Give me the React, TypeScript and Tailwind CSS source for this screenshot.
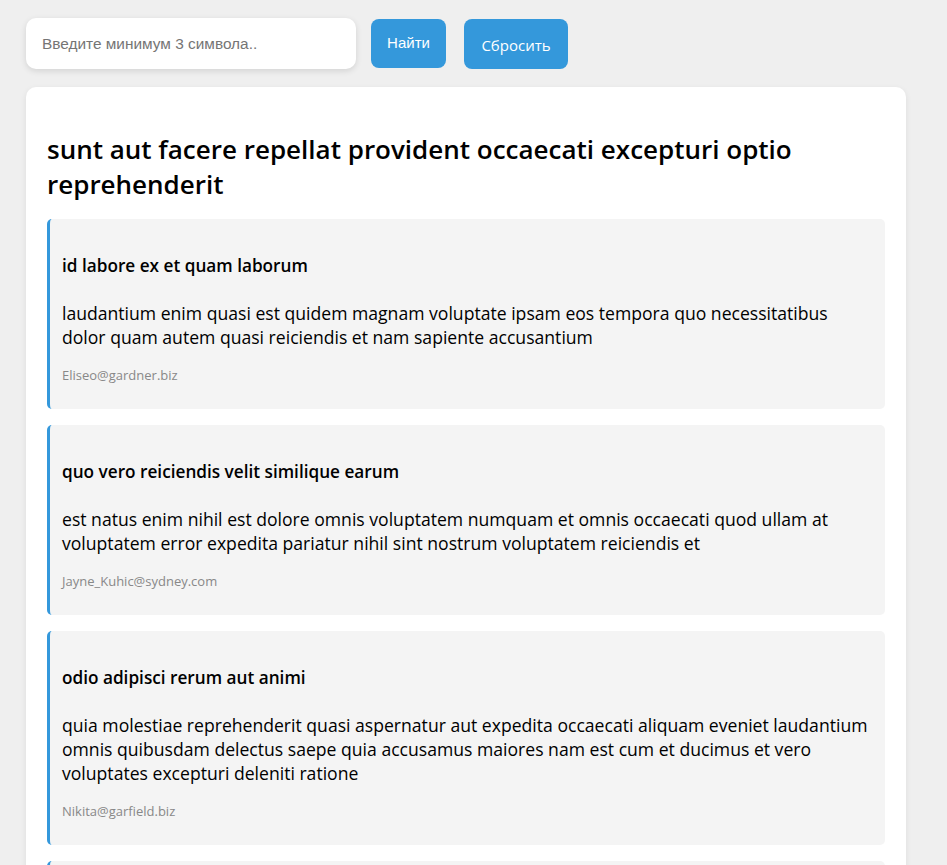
import { useState } from 'react'

const posts = {
  title: 'sunt aut facere repellat provident occaecati excepturi optio reprehenderit',
  comments: [
    {
      id: 1,
      name: 'id labore ex et quam laborum',
      body: 'laudantium enim quasi est quidem magnam voluptate ipsam eos tempora quo necessitatibus dolor quam autem quasi reiciendis et nam sapiente accusantium',
      email: 'Eliseo@gardner.biz',
    },
    {
      id: 2,
      name: 'quo vero reiciendis velit similique earum',
      body: 'est natus enim nihil est dolore omnis voluptatem numquam et omnis occaecati quod ullam at voluptatem error expedita pariatur nihil sint nostrum voluptatem reiciendis et',
      email: 'Jayne_Kuhic@sydney.com',
    },
    {
      id: 3,
      name: 'odio adipisci rerum aut animi',
      body: 'quia molestiae reprehenderit quasi aspernatur aut expedita occaecati aliquam eveniet laudantium omnis quibusdam delectus saepe quia accusamus maiores nam est cum et ducimus et vero voluptates excepturi deleniti ratione',
      email: 'Nikita@garfield.biz',
    },
    {
      id: 4,
      name: 'alias odio sit',
      body: 'non et atque occaecati deserunt quas accusantium unde odit nobis qui voluptatem quia voluptas consequuntur itaque dolor et qui rerum deleniti ut occaecati',
      email: 'Lew@alysha.tv',
    },
  ],
}

export default function App() {
  const [query, setQuery] = useState('')

  return (
    <div className="min-h-screen bg-[#efefef] px-[26px] pt-[18px] pb-10 font-['Open_Sans',sans-serif] text-black">
      {/* Search bar */}
      <div className="flex items-center gap-[15px]">
        <input
          value={query}
          onChange={(e) => setQuery(e.target.value)}
          placeholder="Введите минимум 3 символа.."
          className="h-[51px] w-[330px] rounded-[10px] bg-white px-4 font-['Liberation_Sans',sans-serif] text-[15.4px] shadow-[0_2px_6px_rgba(0,0,0,0.12)] outline-none placeholder:text-[#757575]"
        />
        <button className="h-[49px] w-[75px] rounded-[8px] bg-[#3498db] font-['Liberation_Sans',sans-serif] text-[15px] text-white">
          Найти
        </button>
        <button className="ml-[3px] h-[50px] w-[104px] rounded-[8px] bg-[#3498db] pt-1 text-[15px] text-white">
          Сбросить
        </button>
      </div>

      {/* Post */}
      <div className="mt-[18px] w-[880px] rounded-[10px] bg-white px-[21px] pt-[45px] pb-4 shadow-[0_2px_6px_rgba(0,0,0,0.08)]">
        <h2 className="text-[26px] leading-[35px] font-semibold">{posts.title}</h2>

        <div className="mt-[17px] flex flex-col gap-4">
          {posts.comments.map((c) => (
            <div
              key={c.id}
              className="rounded-[5px] border-l-[3px] border-[#3498db] bg-[#f4f4f4] pt-[35px] pr-3 pb-[25px] pl-3"
            >
              <h3 className="text-[17.2px] leading-[24px] font-semibold">{c.name}</h3>
              <p className="mt-[23px] text-[17.6px] leading-[24px]">{c.body}</p>
              <p className="mt-[17px] text-[13px] leading-[18px] text-[#888]">{c.email}</p>
            </div>
          ))}
        </div>
      </div>
    </div>
  )
}
